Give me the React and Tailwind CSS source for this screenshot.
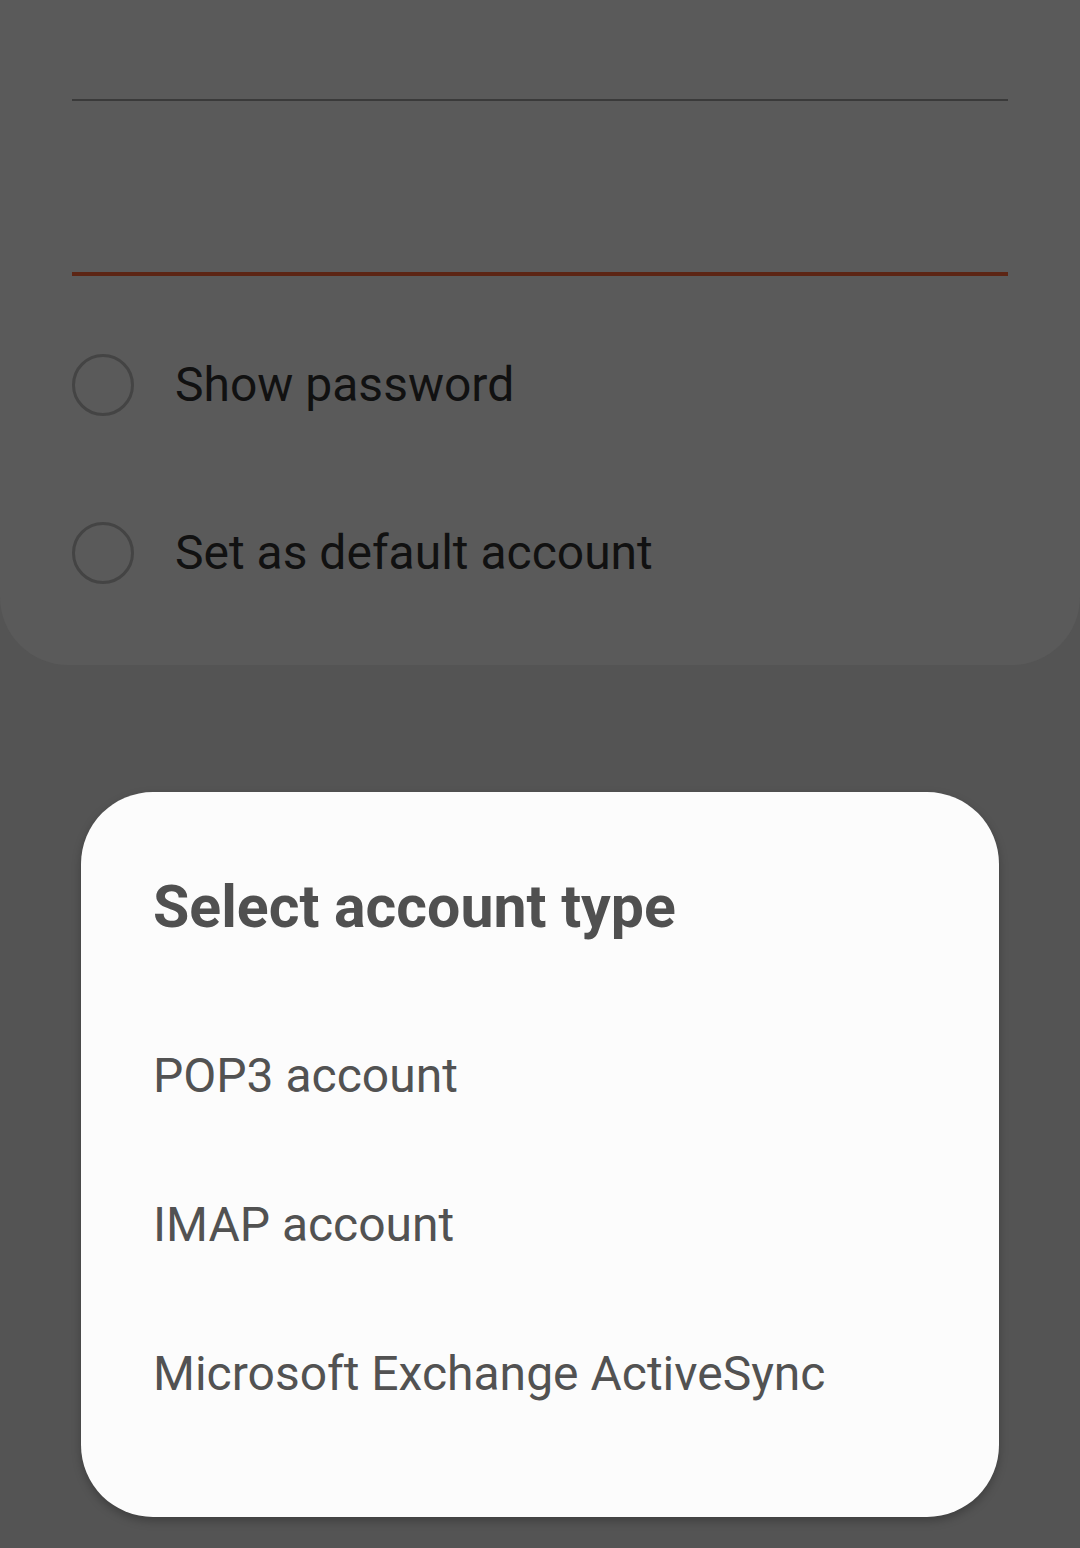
import React from 'react';

const font = { fontFamily: 'Roboto, "Noto Sans", "Liberation Sans", sans-serif' };

const Radio = ({ label }) => (
  <div className="flex items-center h-[168px]">
    <div className="w-[62px] h-[62px] rounded-full border-[3px] border-[#444444] shrink-0"></div>
    <span className="ml-[41px] text-[48px] leading-none text-[#111111]">{label}</span>
  </div>
);

const accountTypes = ['POP3 account', 'IMAP account', 'Microsoft Exchange ActiveSync'];

export default function App() {
  return (
    <div className="relative w-[1080px] h-[1548px] bg-[#545454] overflow-hidden" style={font}>
      {/* Form card behind the dim */}
      <div className="bg-[#5a5a5a] h-[665px] rounded-b-[68px] px-[72px]">
        <div className="h-[99px]"></div>
        <div className="h-[2px] bg-[#3a3a3a]"></div>
        <div className="h-[171px]"></div>
        <div className="h-[4px] bg-[#5c2514]"></div>
        <div className="pt-[25px]">
          <Radio label="Show password" />
          <Radio label="Set as default account" />
        </div>
      </div>

      {/* Dialog */}
      <div className="absolute left-[81px] top-[792px] w-[918px] h-[725px] bg-[#fcfcfc] rounded-[72px] shadow-[0_4px_10px_rgba(0,0,0,0.25)] pl-[72px]">
        <h2 className="pt-[80px] h-[209px] text-[59px] font-bold leading-[70px] text-[#505050]">
          Select account type
        </h2>
        <ul>
          {accountTypes.map((t) => (
            <li key={t} className="h-[149px] flex items-center text-[48px] leading-none text-[#525252]">
              {t}
            </li>
          ))}
        </ul>
      </div>
    </div>
  );
}
